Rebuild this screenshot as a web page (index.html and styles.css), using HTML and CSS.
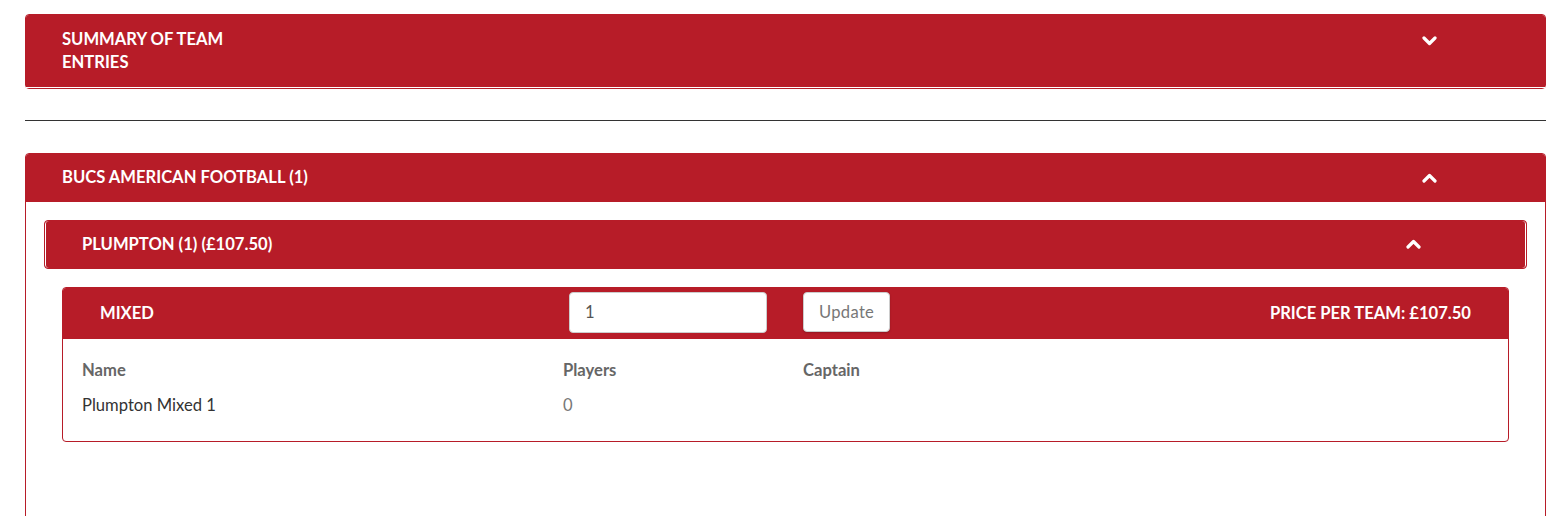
FILE: index.html
```html
<!DOCTYPE html>
<html lang="en">
<head>
    <meta charset="UTF-8">
    <meta name="viewport" content="width=device-width, initial-scale=1.0">
    <title>Team Entries</title>
    <link rel="stylesheet" href="styles.css">
</head>
<body>
    <div class="page">
        <!-- Summary panel (collapsed) -->
        <div class="panel panel-collapsed">
            <div class="panel-heading">
                <div class="title title-narrow">Summary of Team Entries</div>
                <svg class="chevron" width="15" height="10" viewBox="0 0 15 10">
                    <polyline points="2,2 7.5,7.5 13,2" />
                </svg>
            </div>
        </div>

        <hr class="divider">

        <!-- Sport panel -->
        <div class="panel">
            <div class="panel-heading">
                <div class="title">Bucs American Football (1)</div>
                <svg class="chevron" width="15" height="10" viewBox="0 0 15 10">
                    <polyline points="2,8 7.5,2.5 13,8" />
                </svg>
            </div>
            <div class="panel-body">
                <div class="sub-heading">
                    <div class="title">Plumpton (1) (&pound;107.50)</div>
                    <svg class="chevron" width="15" height="10" viewBox="0 0 15 10">
                        <polyline points="2,8 7.5,2.5 13,8" />
                    </svg>
                </div>

                <div class="team-panel">
                    <div class="team-heading">
                        <div class="title">Mixed</div>
                        <div><input type="text" class="qty" value="1"></div>
                        <div><button type="button" class="btn">Update</button></div>
                        <div class="price">Price per team: &pound;107.50</div>
                    </div>
                    <div class="team-body">
                        <div class="team-row team-head">
                            <div>Name</div>
                            <div>Players</div>
                            <div>Captain</div>
                        </div>
                        <div class="team-row">
                            <div class="team-name">Plumpton Mixed 1</div>
                            <div class="muted">0</div>
                            <div></div>
                        </div>
                    </div>
                </div>
            </div>
        </div>
    </div>
</body>
</html>
```

FILE: styles.css
```css
body {
    margin: 0;
    padding: 0;
    font-family: Lato, "Open Sans", sans-serif;
    font-size: 16.6px;
    line-height: 22.86px;
    color: #333;
    background-color: #fff;
}

.page {
    padding: 14px 9px 0 25px;
}

.panel {
    border: 1px solid #b71c28;
    border-radius: 4px;
}

.panel-heading {
    display: flex;
    justify-content: space-between;
    align-items: center;
    height: 48px;
    box-sizing: border-box;
    padding: 0 0 0 36px;
    background-color: #b71c28;
    color: #fff;
    border-radius: 3px 3px 0 0;
}

.panel-collapsed .panel-heading {
    align-items: flex-start;
    height: auto;
    padding-top: 13px;
    padding-bottom: 13px;
    border-bottom: 1px solid #fff;
}

.panel-collapsed .chevron {
    margin-top: 8px;
}

.title {
    font-weight: bold;
    text-transform: uppercase;
}

.title-narrow {
    width: 200px;
}

.chevron {
    display: block;
    margin-right: 108px;
}

.chevron polyline {
    fill: none;
    stroke: #fff;
    stroke-width: 3.2;
    stroke-linecap: round;
    stroke-linejoin: round;
}

.divider {
    margin: 31px 0 32px;
    border: 0;
    border-top: 1px solid #333;
}

.panel-body {
    padding: 18px 18px 90px;
}

.sub-heading {
    display: flex;
    justify-content: space-between;
    align-items: center;
    box-sizing: border-box;
    height: 49px;
    padding-left: 37px;
    background-color: #b71c28;
    color: #fff;
    border: 1px solid #b71c28;
    border-radius: 4px;
    box-shadow: inset 1px 0 0 #fff, inset -1px 0 0 #fff;
}

.sub-heading .chevron {
    margin-right: 105px;
}

.team-panel {
    margin: 18px 18px 0;
    border: 1px solid #b71c28;
    border-radius: 4px;
}

.team-heading {
    display: grid;
    grid-template-columns: 463px 240px auto 1fr;
    align-items: center;
    height: 51px;
    padding: 0 37px 0 37px;
    background-color: #b71c28;
    color: #fff;
    border-radius: 3px 3px 0 0;
}

.qty {
    box-sizing: border-box;
    width: 198px;
    height: 41px;
    margin-left: 6px;
    margin-top: -2px;
    padding: 6px 15px;
    font-family: inherit;
    font-size: 16.6px;
    color: #555;
    background-color: #fff;
    border: 1px solid #ccc;
    border-radius: 4px;
    display: block;
}

.btn {
    box-sizing: border-box;
    height: 40px;
    margin-top: -2px;
    padding: 6px 15px;
    font-family: inherit;
    font-size: 16.6px;
    letter-spacing: 0.3px;
    color: #777;
    background-color: #fff;
    border: 1px solid #ccc;
    border-radius: 4px;
    box-shadow: 0 1px 2px rgba(0, 0, 0, 0.2);
    display: block;
    cursor: pointer;
}

.price {
    text-align: right;
    font-weight: bold;
    text-transform: uppercase;
}

.team-body {
    padding: 14px 20px 18px 19px;
}

.team-row {
    display: grid;
    grid-template-columns: 481px 240px 1fr;
    padding: 6px 0;
    line-height: 23px;
}

.team-head {
    font-weight: bold;
    color: #666;
}

.team-name {
    color: #333;
}

.muted {
    color: #777;
}
```
